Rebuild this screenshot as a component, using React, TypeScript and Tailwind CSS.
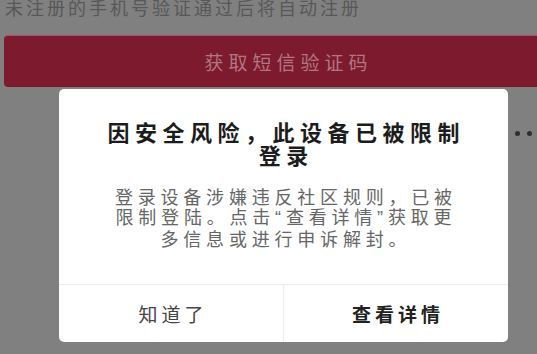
import React from "react";

const cjk = { fontFamily: '"Noto Sans CJK SC", "Noto Sans", sans-serif' };
const latin = { fontFamily: '"Liberation Sans", sans-serif' };

export default function App() {
  return (
    <div
      className="relative w-[537px] h-[354px] overflow-hidden bg-[#808080]"
      style={cjk}
    >
      <div className="mt-[-3px] pl-[5px] text-[18px] leading-[20px] tracking-[3px] text-[#585858] whitespace-nowrap">
        未注册的手机号验证通过后将自动注册
      </div>
      <div className="ml-[4px] mt-[18px] w-[564px] h-[52px] rounded-l-[4px] bg-[#7e1a2e] border-t border-[#9a5866] flex items-center justify-center">
        <span className="text-[19px] leading-[20px] tracking-[5px] text-[#b07682] pl-[5px]">
          获取短信验证码
        </span>
      </div>
      <div className="flex justify-end gap-[7px] pr-[5px] pt-[44px]">
        <span className="block w-[5px] h-[5px] rounded-full bg-[#2e2e2e]" />
        <span className="block w-[5px] h-[5px] rounded-full bg-[#2e2e2e]" />
      </div>

      <div className="absolute left-[59px] top-[89px] w-[449px] h-[253px] rounded-[5px] bg-white flex flex-col">
        <div className="h-[195px] flex flex-col items-center pt-[31px]">
          <div className="text-[22px] leading-[23px] font-bold tracking-[5.5px] text-[#1c1c1c] text-center whitespace-nowrap pl-[5.5px]">
            <div>因安全风险，此设备已被限制</div>
            <div>登录</div>
          </div>
          <div className="mt-[20px] text-[18px] leading-[20px] tracking-[4.8px] text-[#666666] text-center whitespace-nowrap pl-[4.8px]">
            <div>登录设备涉嫌违反社区规则，已被</div>
            <div>
              限制登陆。点击<span style={latin}>“</span>查看详情<span style={latin}>”</span>获取更
            </div>
            <div>多信息或进行申诉解封。</div>
          </div>
        </div>
        <div className="flex-1 flex border-t border-[#ececec]">
          <div className="flex-1 flex items-center justify-center text-[19px] leading-[20px] tracking-[4px] pl-[4px] text-[#444444]">
            知道了
          </div>
          <div className="w-px bg-[#ececec]" />
          <div className="flex-1 flex items-center justify-center text-[19px] leading-[20px] tracking-[4px] pl-[4px] font-bold text-[#222222]">
            查看详情
          </div>
        </div>
      </div>
    </div>
  );
}
